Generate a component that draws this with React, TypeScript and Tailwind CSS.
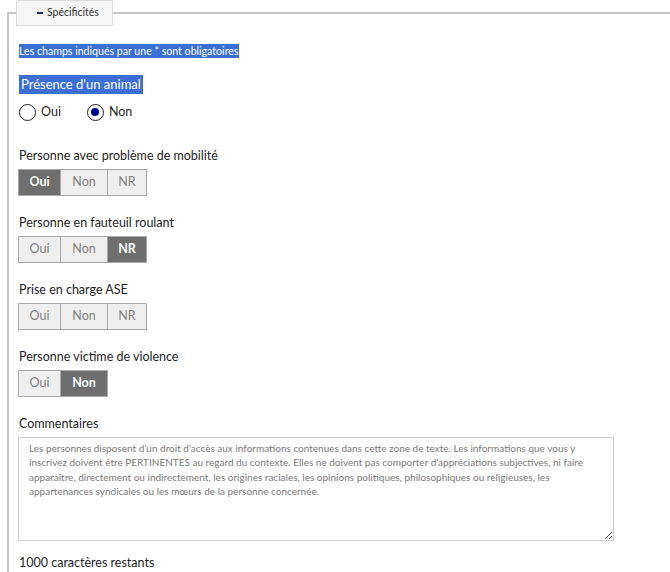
import { useState } from 'react'

type Choice = 'Oui' | 'Non' | 'NR' | null

const font = { fontFamily: 'Lato, "Open Sans", sans-serif' }

function Segmented({ options, value, onChange }: { options: string[]; value: Choice; onChange: (v: Choice) => void }) {
  return (
    <div className="flex h-[27px]">
      {options.map((opt, i) => {
        const active = value === opt
        return (
          <button
            key={opt}
            type="button"
            onClick={() => onChange(opt as Choice)}
            className={`h-full text-[12.5px] border border-[#a9a9a9] ${i > 0 ? '-ml-px' : ''} ${
              opt === 'Oui' ? 'w-[43px]' : opt === 'Non' ? 'w-[48px]' : 'w-[40px]'
            } ${active ? 'bg-[#6e6e6e] text-white font-bold border-[#6e6e6e]' : 'bg-[#efefef] text-[#808080]'}`}
          >
            {opt}
          </button>
        )
      })}
    </div>
  )
}

function Question({ label, options, initial }: { label: string; options: string[]; initial: Choice }) {
  const [value, setValue] = useState<Choice>(initial)
  return (
    <div>
      <div className="text-[12.5px] text-[#1e1e1e] leading-[18px] pl-px">{label}</div>
      <div className="mt-[4px]">
        <Segmented options={options} value={value} onChange={setValue} />
      </div>
    </div>
  )
}

function Radio({ checked, label, onClick }: { checked: boolean; label: string; onClick: () => void }) {
  return (
    <button type="button" onClick={onClick} className="flex items-center gap-[5px] text-[12.5px] text-[#1e1e1e]">
      <span className="w-[17px] h-[17px] rounded-full border-[1.5px] border-[#222] flex items-center justify-center">
        {checked && <span className="w-[8px] h-[8px] rounded-full bg-[#000091]" />}
      </span>
      {label}
    </button>
  )
}

export default function App() {
  const [animal, setAnimal] = useState('Non')
  const [comment, setComment] = useState('')

  return (
    <div className="w-[670px] h-[572px] bg-white overflow-hidden" style={font}>
      <fieldset className="ml-[7px] w-[700px] border-l-2 border-t-2 border-[#c6c6c6] pl-[9px] pb-4">
        <legend className="-ml-[2px] h-[26px] bg-[#f6f6f6] border border-[#dcdcdc] flex items-center pl-[20px] pr-[13px] text-[10.5px] text-[#333]">
          <span className="w-[6px] h-[2px] bg-[#1e2a5a] mr-[4px]" />
          Spécificités
        </legend>

        <div className="mt-[11px] pl-px">
          <span className="bg-[#3b6fd6] text-white text-[10.6px] leading-[15px] py-[1px] pr-[1px]">
            Les champs indiqués par une * sont obligatoires
          </span>
        </div>

        <div className="mt-[10px] pl-px">
          <span className="bg-[#3b6fd6] text-white text-[13px] leading-[17px] px-[2px] py-[1px] inline-block">
            Présence d'un animal
          </span>
        </div>

        <div className="flex items-center gap-[26px] mt-[8px] pl-px">
          <Radio checked={animal === 'Oui'} label="Oui" onClick={() => setAnimal('Oui')} />
          <Radio checked={animal === 'Non'} label="Non" onClick={() => setAnimal('Non')} />
        </div>

        <div className="mt-[25px] flex flex-col gap-[18px]">
          <Question label="Personne avec problème de mobilité" options={['Oui', 'Non', 'NR']} initial="Oui" />
          <Question label="Personne en fauteuil roulant" options={['Oui', 'Non', 'NR']} initial="NR" />
          <Question label="Prise en charge ASE" options={['Oui', 'Non', 'NR']} initial={null} />
          <Question label="Personne victime de violence" options={['Oui', 'Non']} initial="Non" />
        </div>

        <div className="mt-[18px] text-[12.5px] text-[#1e1e1e] leading-[18px] pl-px">Commentaires</div>
        <textarea
          value={comment}
          onChange={(e) => setComment(e.target.value)}
          maxLength={1000}
          placeholder="Les personnes disposent d’un droit d’accès aux informations contenues dans cette zone de texte. Les informations que vous y inscrivez doivent être PERTINENTES au regard du contexte. Elles ne doivent pas comporter d’appréciations subjectives, ni faire apparaître, directement ou indirectement, les origines raciales, les opinions politiques, philosophiques ou religieuses, les appartenances syndicales ou les mœurs de la personne concernée."
          className="block mt-[4px] w-[596px] h-[104px] border border-[#cfcfcf] px-[10px] py-[3px] text-[10px] leading-[14.5px] text-[#333] placeholder:text-[#7a7a7a] outline-none"
        />
        <div className="mt-[13px] text-[12.5px] text-[#1e1e1e] leading-[18px] pl-px">{1000 - comment.length} caractères restants</div>
      </fieldset>
    </div>
  )
}
